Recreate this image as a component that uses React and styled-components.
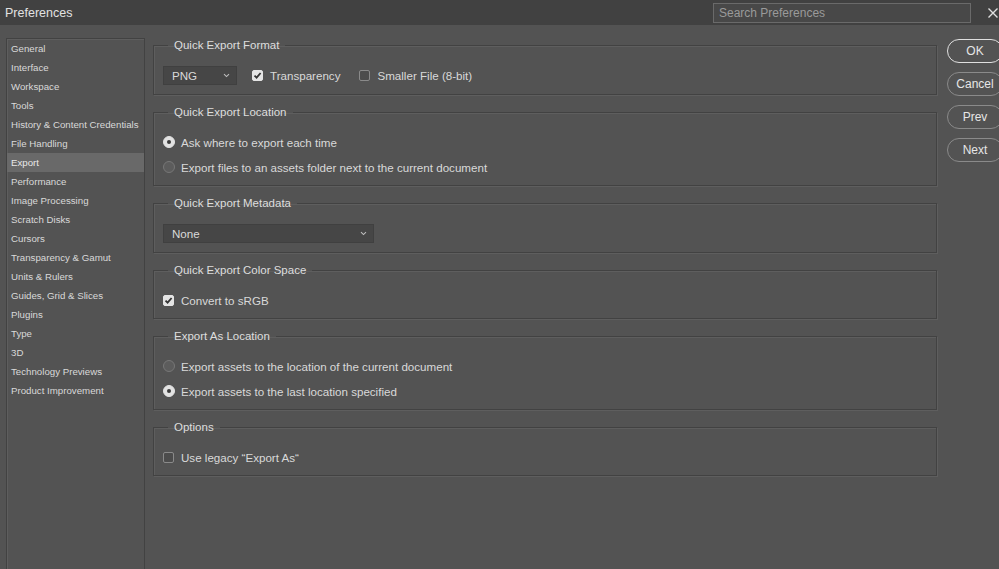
import React from 'react';
import styled, { createGlobalStyle } from 'styled-components';

const colors = {
    titlebar: '#414141',
    body: '#535353',
    text: '#d9d9d9',
    dim: '#9a9a9a',
    line: '#424242',
    hilite: '#5e5e5e',
    selected: '#696969',
    field: '#464646'
};

const GlobalStyle = createGlobalStyle`
    html, body {
        margin: 0;
        padding: 0;
        background: ${colors.body};
    }
    body {
        font-family: "Liberation Sans", Arial, sans-serif;
        color: ${colors.text};
    }
`;

const Window = styled.div`
    width: 999px;
    height: 569px;
    overflow: hidden;
    display: flex;
    flex-direction: column;
    background: ${colors.body};
`;

const TitleBar = styled.div`
    height: 25px;
    flex: none;
    display: flex;
    align-items: center;
    background: ${colors.titlebar};
    padding-left: 5px;
`;

const Title = styled.div`
    font-size: 12.5px;
    color: #e2e2e2;
    flex: 1;
`;

const Search = styled.div`
    width: 251px;
    height: 18px;
    border: 1px solid #6a6a6a;
    background: #484848;
    color: ${colors.dim};
    font-size: 12px;
    line-height: 18px;
    padding-left: 5px;
    margin-right: 16px;
`;

const Close = styled.div`
    width: 12px;
    display: flex;
    align-items: center;
`;

const Body = styled.div`
    flex: 1;
    display: flex;
    padding: 13px 0 0 6px;
    min-height: 0;
`;

const Sidebar = styled.ul`
    list-style: none;
    margin: 0;
    padding: 0;
    width: 137px;
    flex: none;
    border: 1px solid ${colors.line};
    border-bottom: none;
    box-shadow: inset 1px 1px 0 ${colors.hilite};
    height: 600px;
`;

const NavItem = styled.li`
    height: 19px;
    line-height: 19px;
    padding-left: 4px;
    font-size: 9.7px;
    background: ${p => (p.$active ? colors.selected : 'transparent')};
    color: ${p => (p.$active ? '#e8e8e8' : colors.text)};
    white-space: nowrap;
`;

const Main = styled.div`
    width: 784px;
    flex: none;
    margin-left: 8px;
    margin-top: -1px;
    display: flex;
    flex-direction: column;
    gap: 9px;
`;

const Group = styled.fieldset`
    margin: 0;
    padding: 13px 9px 9px 9px;
    border: 1px solid ${colors.line};
    box-shadow: 1px 1px 0 ${colors.hilite}, inset 1px 1px 0 ${colors.hilite};
    display: flex;
    flex-direction: column;
    gap: 7px;
    min-width: 0;
`;

const Legend = styled.legend`
    font-size: 11.5px;
    line-height: 16px;
    padding: 0 6px;
    margin-left: 5px;
    color: #dedede;
`;

const Row = styled.div`
    display: flex;
    align-items: center;
    height: ${p => p.$h || 18}px;
    font-size: 11.6px;
`;

const Select = styled.div`
    width: ${p => p.$w}px;
    height: 19px;
    box-sizing: border-box;
    background: ${colors.field};
    border: 1px solid #404040;
    display: flex;
    align-items: center;
    justify-content: space-between;
    padding: 0 6px 0 8px;
    font-size: 11.6px;
    margin-right: ${p => p.$mr || 0}px;
`;

const Box = styled.span`
    width: 11px;
    height: 11px;
    box-sizing: border-box;
    border-radius: 2px;
    flex: none;
    display: inline-flex;
    align-items: center;
    justify-content: center;
    background: ${p => (p.$on ? '#e4e4e4' : '#4c4c4c')};
    border: 1px solid ${p => (p.$on ? '#e4e4e4' : '#8a8a8a')};
    margin-right: 7px;
`;

const Radio = styled.span`
    width: 12px;
    height: 12px;
    box-sizing: border-box;
    border-radius: 50%;
    flex: none;
    display: inline-flex;
    align-items: center;
    justify-content: center;
    background: ${p => (p.$on ? '#e2e2e2' : '#5c5c5c')};
    border: 1px solid ${p => (p.$on ? '#e2e2e2' : '#777777')};
    margin-right: 6px;
    &::after {
        content: '';
        width: 4px;
        height: 4px;
        border-radius: 50%;
        background: ${p => (p.$on ? '#3a3a3a' : 'transparent')};
    }
`;

const Label = styled.span`
    margin-right: ${p => p.$mr || 0}px;
    white-space: nowrap;
`;

const Buttons = styled.div`
    margin-left: 10px;
    margin-top: 1px;
    display: flex;
    flex-direction: column;
    gap: 9px;
`;

const Button = styled.div`
    width: 56px;
    height: 24px;
    box-sizing: border-box;
    border-radius: 12px;
    border: ${p => (p.$primary ? '1.5px solid #e0e0e0' : '1px solid #8a8a8a')};
    display: flex;
    align-items: center;
    justify-content: center;
    font-size: 12px;
    color: #e6e6e6;
`;

const Chevron = () => (
    <svg width="7" height="5" viewBox="0 0 7 5">
        <path d="M1 1.2 L3.5 3.6 L6 1.2" fill="none" stroke="#bdbdbd" strokeWidth="1.1" />
    </svg>
);

const Check = () => (
    <svg width="9" height="9" viewBox="0 0 9 9">
        <path d="M1.5 4.6 L3.6 6.7 L7.6 2" fill="none" stroke="#333" strokeWidth="1.8" />
    </svg>
);

const Checkbox = ({ on, label, mr }) => (
    <>
        <Box $on={on}>{on && <Check />}</Box>
        <Label $mr={mr}>{label}</Label>
    </>
);

const RadioRow = ({ on, label }) => (
    <Row>
        <Radio $on={on} />
        <Label>{label}</Label>
    </Row>
);

const navItems = [
    'General', 'Interface', 'Workspace', 'Tools', 'History & Content Credentials',
    'File Handling', 'Export', 'Performance', 'Image Processing', 'Scratch Disks',
    'Cursors', 'Transparency & Gamut', 'Units & Rulers', 'Guides, Grid & Slices',
    'Plugins', 'Type', '3D', 'Technology Previews', 'Product Improvement'
];

const App = () => (
    <Window>
        <GlobalStyle />
        <TitleBar>
            <Title>Preferences</Title>
            <Search>Search Preferences</Search>
            <Close>
                <svg width="12" height="12" viewBox="0 0 12 12">
                    <path d="M1.5 1.5 L10.5 10.5 M10.5 1.5 L1.5 10.5" stroke="#e0e0e0" strokeWidth="1.4" />
                </svg>
            </Close>
        </TitleBar>
        <Body>
            <Sidebar>
                {navItems.map(item => (
                    <NavItem key={item} $active={item === 'Export'}>{item}</NavItem>
                ))}
            </Sidebar>
            <Main>
                <Group>
                    <Legend>Quick Export Format</Legend>
                    <Row $h={19}>
                        <Select $w={74} $mr={15}>PNG<Chevron /></Select>
                        <Checkbox on label="Transparency" mr={19} />
                        <Checkbox label="Smaller File (8-bit)" />
                    </Row>
                </Group>
                <Group>
                    <Legend>Quick Export Location</Legend>
                    <RadioRow on label="Ask where to export each time" />
                    <RadioRow label="Export files to an assets folder next to the current document" />
                </Group>
                <Group>
                    <Legend>Quick Export Metadata</Legend>
                    <Row $h={19}>
                        <Select $w={211}>None<Chevron /></Select>
                    </Row>
                </Group>
                <Group>
                    <Legend>Quick Export Color Space</Legend>
                    <Row>
                        <Checkbox on label="Convert to sRGB" />
                    </Row>
                </Group>
                <Group>
                    <Legend>Export As Location</Legend>
                    <RadioRow label="Export assets to the location of the current document" />
                    <RadioRow on label="Export assets to the last location specified" />
                </Group>
                <Group>
                    <Legend>Options</Legend>
                    <Row>
                        <Checkbox label={'Use legacy \u201cExport As\u201c'} />
                    </Row>
                </Group>
            </Main>
            <Buttons>
                <Button $primary>OK</Button>
                <Button>Cancel</Button>
                <Button>Prev</Button>
                <Button>Next</Button>
            </Buttons>
        </Body>
    </Window>
);

export default App;
